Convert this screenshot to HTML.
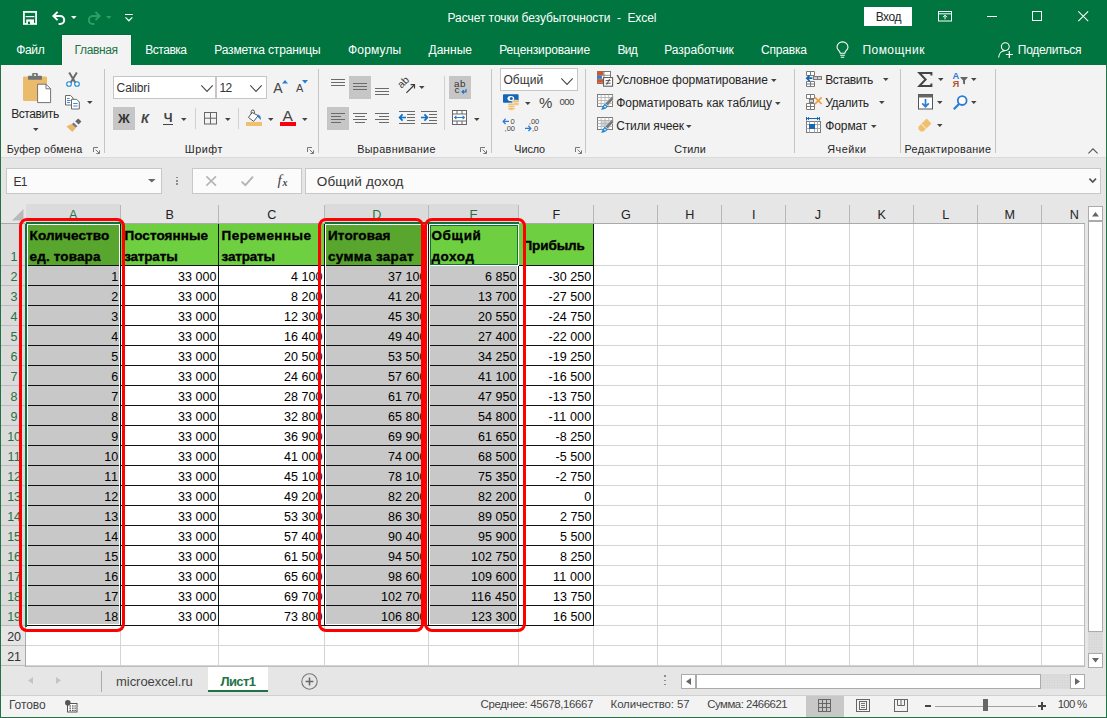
<!DOCTYPE html>
<html><head><meta charset="utf-8"><title>Excel</title>
<style>
html,body{margin:0;padding:0;}
body{width:1107px;height:718px;overflow:hidden;position:relative;background:#e6e6e6;font-family:"Liberation Sans", sans-serif;}
.b{position:absolute;box-sizing:border-box;}
.t{position:absolute;white-space:pre;font-family:"Liberation Sans", sans-serif;}
svg{overflow:visible;}
</style></head><body>
<div class="b" style="left:0px;top:0px;width:1107px;height:65px;background:#00753f;"></div>
<div class="b" style="left:0px;top:65px;width:1107px;height:92.5px;background:#f3f3f3;"></div>
<div class="b" style="left:0px;top:157px;width:1107px;height:1px;background:#dadada;"></div>
<div class="b" style="left:0px;top:695px;width:1107px;height:23px;background:#f3f3f3;"></div>
<div class="b" style="left:0px;top:695px;width:1107px;height:1px;background:#d0d0d0;"></div>
<svg class="b" style="left:23px;top:11px;" width="14" height="14" viewBox="0 0 14 14"><rect x=".9" y=".9" width="12.2" height="12" fill="none" stroke="#fff" stroke-width="1.8"/><path d="M2.6 5.6H11.4" stroke="#fff" stroke-width="1.2"/><rect x="3.2" y="8.4" width="7.8" height="4.6" fill="#fff"/><rect x="5" y="10.6" width="2" height="2.6" fill="#00753f"/></svg>
<svg class="b" style="left:52px;top:10.5px;" width="14" height="14" viewBox="0 0 14 14"><path d="M1.4 5H8.2A4 4 0 0 1 8.2 13H6.6" fill="none" stroke="#fff" stroke-width="2"/><path d="M5.6 .9L1.4 5L5.6 9.1" fill="none" stroke="#fff" stroke-width="2"/></svg>
<svg class="b" style="left:70.9px;top:16.3px;" width="5.6" height="3.1" viewBox="0 0 5.6 3.1"><path d="M0 0H5.6L2.8 3.1Z" fill="#fff"/></svg>
<svg class="b" style="left:87px;top:10.5px;" width="14" height="14" viewBox="0 0 14 14"><path d="M12.6 5H5.8A4 4 0 0 0 5.8 13H7.4" fill="none" stroke="#28a262" stroke-width="2"/><path d="M8.4 .9L12.6 5L8.4 9.1" fill="none" stroke="#28a262" stroke-width="2"/></svg>
<svg class="b" style="left:106.0px;top:16.3px;" width="5.6" height="3.1" viewBox="0 0 5.6 3.1"><path d="M0 0H5.6L2.8 3.1Z" fill="#28a262"/></svg>
<svg class="b" style="left:124.8px;top:13.6px;" width="7.8" height="8" viewBox="0 0 7.8 8"><path d="M0 .5H7.8" stroke="#fff" stroke-width="1"/><path d="M.5 3.4L3.9 6.8L7.3 3.4" fill="none" stroke="#fff" stroke-width="1.2"/></svg>
<span class="t" style="left:447.50px;top:12.00px;font-size:12px;line-height:12px;color:#ffffff;letter-spacing:-0.059px;">Расчет точки безубыточности  -  Excel</span>
<div class="b" style="left:863.5px;top:7px;width:48.5px;height:19px;background:#fff;"></div>
<span class="t" style="left:875.70px;top:11.40px;font-size:12px;line-height:12px;color:#262626;letter-spacing:-0.464px;">Вход</span>
<svg class="b" style="left:937.5px;top:11px;" width="14" height="10.5" viewBox="0 0 14 10.5"><rect x=".5" y=".5" width="13" height="9.5" fill="none" stroke="#fff"/><path d="M.5 2.8H13.5" stroke="#fff"/><path d="M7 8.3V4.3M5 6.2L7 4.2L9 6.2" fill="none" stroke="#fff"/></svg>
<div class="b" style="left:986.5px;top:16px;width:10px;height:1px;background:#fff;"></div>
<div class="b" style="left:1032px;top:11px;width:10px;height:10px;border:1px solid #fff;"></div>
<svg class="b" style="left:1078px;top:11px;" width="10.5" height="10.5" viewBox="0 0 10.5 10.5"><path d="M.3.3L10.2 10.2M10.2.3L.3 10.2" stroke="#fff" stroke-width="1.05"/></svg>
<div class="b" style="left:61px;top:34px;width:71px;height:31px;background:#006c36;"></div>
<div class="b" style="left:62px;top:35px;width:69px;height:30px;background:#f3f3f3;"></div>
<div class="b" style="left:62px;top:35px;width:69px;height:1px;background:#fdfdfd;"></div>
<div class="b" style="left:62px;top:35px;width:1px;height:30px;background:#fdfdfd;"></div>
<span class="t" style="left:16.30px;top:44.00px;font-size:12px;line-height:12px;color:#ffffff;letter-spacing:-0.379px;">Файл</span>
<span class="t" style="left:74.60px;top:44.00px;font-size:12px;line-height:12px;color:#217346;letter-spacing:-0.384px;">Главная</span>
<span class="t" style="left:145.20px;top:44.00px;font-size:12px;line-height:12px;color:#ffffff;letter-spacing:-0.458px;">Вставка</span>
<span class="t" style="left:214.20px;top:44.00px;font-size:12px;line-height:12px;color:#ffffff;letter-spacing:-0.151px;">Разметка страницы</span>
<span class="t" style="left:348.00px;top:44.00px;font-size:12px;line-height:12px;color:#ffffff;letter-spacing:0.169px;">Формулы</span>
<span class="t" style="left:428.50px;top:44.00px;font-size:12px;line-height:12px;color:#ffffff;letter-spacing:0.023px;">Данные</span>
<span class="t" style="left:499.20px;top:44.00px;font-size:12px;line-height:12px;color:#ffffff;letter-spacing:-0.134px;">Рецензирование</span>
<span class="t" style="left:617.60px;top:44.00px;font-size:12px;line-height:12px;color:#ffffff;letter-spacing:-0.773px;">Вид</span>
<span class="t" style="left:664.30px;top:44.00px;font-size:12px;line-height:12px;color:#ffffff;letter-spacing:-0.044px;">Разработчик</span>
<span class="t" style="left:761.00px;top:44.00px;font-size:12px;line-height:12px;color:#ffffff;letter-spacing:-0.183px;">Справка</span>
<span class="t" style="left:862.40px;top:44.00px;font-size:12px;line-height:12px;color:#ffffff;letter-spacing:0.477px;">Помощник</span>
<span class="t" style="left:1017.80px;top:44.00px;font-size:12px;line-height:12px;color:#ffffff;letter-spacing:-0.287px;">Поделиться</span>
<svg class="b" style="left:836px;top:42px;" width="13" height="17" viewBox="0 0 13 17"><path d="M4.2 11.2C4.2 9.2 1 8 1 5.2A5.4 5.2 0 0 1 12 5.2C12 8 8.8 9.2 8.8 11.2Z" fill="none" stroke="#fff" stroke-width="1.1"/><path d="M4.2 13.2H8.8M4.8 15.2H8.2" stroke="#fff" stroke-width="1.1"/></svg>
<svg class="b" style="left:998px;top:42px;" width="16" height="17" viewBox="0 0 16 17"><circle cx="7.3" cy="4.6" r="3.9" fill="none" stroke="#fff" stroke-width="1.1"/><path d="M.6 15.5C1 11 4 8.6 7 8.6" fill="none" stroke="#fff" stroke-width="1.1"/><path d="M11.3 9V16M7.8 12.5H14.8" stroke="#fff" stroke-width="1.2"/></svg>
<div class="b" style="left:104px;top:69px;width:1px;height:84px;background:#c6c6c6;"></div>
<div class="b" style="left:318px;top:69px;width:1px;height:84px;background:#c6c6c6;"></div>
<div class="b" style="left:491px;top:69px;width:1px;height:84px;background:#c6c6c6;"></div>
<div class="b" style="left:585px;top:69px;width:1px;height:84px;background:#c6c6c6;"></div>
<div class="b" style="left:794px;top:69px;width:1px;height:84px;background:#c6c6c6;"></div>
<div class="b" style="left:900px;top:69px;width:1px;height:84px;background:#c6c6c6;"></div>
<div class="b" style="left:995px;top:69px;width:1px;height:84px;background:#c6c6c6;"></div>
<span class="t" style="left:6.70px;top:143.60px;font-size:10.8px;line-height:10.8px;color:#262626;letter-spacing:0.194px;">Буфер обмена</span>
<span class="t" style="left:184.80px;top:143.60px;font-size:10.8px;line-height:10.8px;color:#262626;letter-spacing:0.534px;">Шрифт</span>
<span class="t" style="left:357.20px;top:143.60px;font-size:10.8px;line-height:10.8px;color:#262626;letter-spacing:0.356px;">Выравнивание</span>
<span class="t" style="left:514.30px;top:143.60px;font-size:10.8px;line-height:10.8px;color:#262626;letter-spacing:-0.072px;">Число</span>
<span class="t" style="left:674.30px;top:143.60px;font-size:10.8px;line-height:10.8px;color:#262626;letter-spacing:0.078px;">Стили</span>
<span class="t" style="left:827.20px;top:143.60px;font-size:10.8px;line-height:10.8px;color:#262626;letter-spacing:0.514px;">Ячейки</span>
<span class="t" style="left:904.50px;top:143.60px;font-size:10.8px;line-height:10.8px;color:#262626;letter-spacing:0.325px;">Редактирование</span>
<svg class="b" style="left:93px;top:146.5px;" width="7" height="7" viewBox="0 0 7 7"><path d="M.5 5V.5H5" fill="none" stroke="#777" stroke-width="1"/><path d="M2.6 2.6L6.2 6.2M6.5 3.4V6.5H3.4" fill="none" stroke="#777" stroke-width="1"/></svg>
<svg class="b" style="left:307px;top:146.5px;" width="7" height="7" viewBox="0 0 7 7"><path d="M.5 5V.5H5" fill="none" stroke="#777" stroke-width="1"/><path d="M2.6 2.6L6.2 6.2M6.5 3.4V6.5H3.4" fill="none" stroke="#777" stroke-width="1"/></svg>
<svg class="b" style="left:480px;top:146.5px;" width="7" height="7" viewBox="0 0 7 7"><path d="M.5 5V.5H5" fill="none" stroke="#777" stroke-width="1"/><path d="M2.6 2.6L6.2 6.2M6.5 3.4V6.5H3.4" fill="none" stroke="#777" stroke-width="1"/></svg>
<svg class="b" style="left:574.5px;top:146.5px;" width="7" height="7" viewBox="0 0 7 7"><path d="M.5 5V.5H5" fill="none" stroke="#777" stroke-width="1"/><path d="M2.6 2.6L6.2 6.2M6.5 3.4V6.5H3.4" fill="none" stroke="#777" stroke-width="1"/></svg>
<svg class="b" style="left:1088px;top:147.5px;" width="10" height="6" viewBox="0 0 10 6"><path d="M.4 5.4L5 .8L9.6 5.4" fill="none" stroke="#555" stroke-width="1.1"/></svg>
<svg class="b" style="left:23px;top:73px;" width="29" height="31" viewBox="0 0 29 31"><rect x="0" y="3.4" width="24" height="24.6" rx="1.2" fill="#ebbb6c"/>
<rect x="5" y="2.8" width="14" height="3.9" rx=".6" fill="#737373"/><rect x="9.2" y="0" width="5.6" height="4" rx=".8" fill="#737373"/><rect x="11" y="1.3" width="2" height="1.6" fill="#f3f3f3"/>
<path d="M14.6 11.2H23L27.6 15.8V29.6H14.6Z" fill="#fff" stroke="#737373" stroke-width="1"/><path d="M23 11.2V15.8H27.6" fill="none" stroke="#737373" stroke-width="1"/></svg>
<span class="t" style="left:11.20px;top:108.00px;font-size:12px;line-height:12px;color:#262626;letter-spacing:-0.409px;">Вставить</span>
<svg class="b" style="left:32.900000000000006px;top:128px;" width="5.6" height="3.1" viewBox="0 0 5.6 3.1"><path d="M0 0H5.6L2.8 3.1Z" fill="#444"/></svg>
<svg class="b" style="left:66px;top:71.5px;" width="14" height="15" viewBox="0 0 14 15"><path d="M3.2 .4L9.2 10.4M10.8 .4L4.8 10.4" stroke="#6a6a6a" stroke-width="2" fill="none"/>
<circle cx="3" cy="12" r="2.3" fill="#fff" stroke="#1e88d6" stroke-width="1.1"/><circle cx="11" cy="12" r="2.3" fill="#fff" stroke="#1e88d6" stroke-width="1.1"/></svg>
<svg class="b" style="left:65px;top:95px;" width="15" height="14.5" viewBox="0 0 15 14.5"><path d="M.5 .5H5.6L8 2.9V10H.5Z" fill="#fff" stroke="#6a6a6a"/><path d="M2 3.5H4.6M2 5.5H5.6M2 7.5H5" stroke="#2b7cd3" stroke-width=".9"/>
<path d="M6.5 4.3H11.6L14.3 7V14H6.5Z" fill="#fff" stroke="#6a6a6a"/><path d="M8.2 8.5H12.6M8.2 11H12.6" stroke="#2b7cd3" stroke-width=".9"/></svg>
<svg class="b" style="left:86.9px;top:100.8px;" width="5.6" height="3.1" viewBox="0 0 5.6 3.1"><path d="M0 0H5.6L2.8 3.1Z" fill="#444"/></svg>
<svg class="b" style="left:65.5px;top:117.5px;" width="16" height="14" viewBox="0 0 16 14"><path d="M9.2 3.2L12.2 .6L15.4 3.6L12.6 6.6Z" fill="#666"/><path d="M7.6 4.6L11.4 8.2L9.6 9.8L5.8 6.2Z" fill="#777"/>
<path d="M5.4 6L9.8 10L6.4 14L.4 8.4Z" fill="#eab866"/></svg>
<div class="b" style="left:113px;top:76px;width:103px;height:22.5px;background:#fff;border:1px solid #c6c6c6;"></div>
<div class="b" style="left:216px;top:76px;width:51px;height:22.5px;background:#fff;border:1px solid #c6c6c6;"></div>
<span class="t" style="left:116.60px;top:82.00px;font-size:12px;line-height:12px;color:#333;letter-spacing:-0.117px;">Calibri</span>
<span class="t" style="left:219.40px;top:82.00px;font-size:12px;line-height:12px;color:#333;letter-spacing:-0.680px;">12</span>
<svg class="b" style="left:200.5px;top:85px;" width="12" height="7" viewBox="0 0 12 7"><path d="M.3 .4L6.0 6.4L11.7 .4" fill="none" stroke="#444" stroke-width="1.05"/></svg>
<svg class="b" style="left:249.5px;top:85px;" width="12" height="7" viewBox="0 0 12 7"><path d="M.3 .4L6.0 6.4L11.7 .4" fill="none" stroke="#444" stroke-width="1.05"/></svg>
<span class="t" style="left:273.30px;top:80.60px;font-size:14px;line-height:14px;color:#444;letter-spacing:-0.044px;">A</span>
<svg class="b" style="left:281.5px;top:79.5px;" width="6" height="3.4" viewBox="0 0 6 3.4"><path d="M0 3.4L3 0L6 3.4Z" fill="#2b7cd3"/></svg>
<span class="t" style="left:296.00px;top:83.00px;font-size:11px;line-height:11px;color:#444;letter-spacing:-0.344px;">A</span>
<svg class="b" style="left:302px;top:80px;" width="6" height="3.4" viewBox="0 0 6 3.4"><path d="M0 0H6L3 3.4Z" fill="#2b7cd3"/></svg>
<div class="b" style="left:113px;top:107px;width:22px;height:23px;background:#c6c6c6;"></div>
<span class="t" style="left:118.00px;top:112.20px;font-size:13px;line-height:13px;color:#333;font-weight:bold;letter-spacing:1.050px;">Ж</span>
<span class="t" style="left:141.00px;top:112.20px;font-size:13px;line-height:13px;color:#444;font-weight:bold;font-style:italic;letter-spacing:1.000px;">К</span>
<span class="t" style="left:163.80px;top:112.15px;font-size:12.5px;line-height:12.5px;color:#444;font-weight:bold;">Ч</span>
<div class="b" style="left:163.4px;top:124.4px;width:9.6px;height:1px;background:#444;"></div>
<svg class="b" style="left:181.39999999999998px;top:117.8px;" width="5.6" height="3.1" viewBox="0 0 5.6 3.1"><path d="M0 0H5.6L2.8 3.1Z" fill="#444"/></svg>
<div class="b" style="left:195px;top:108px;width:1px;height:21px;background:#d0d0d0;"></div>
<svg class="b" style="left:204px;top:111.5px;" width="13" height="12.5" viewBox="0 0 13 12.5"><rect x=".5" y=".5" width="12" height="11.5" fill="none" stroke="#666"/><path d="M6.5 .5V12M.5 6.2H12.5" stroke="#666"/></svg>
<svg class="b" style="left:224.5px;top:117.8px;" width="5.6" height="3.1" viewBox="0 0 5.6 3.1"><path d="M0 0H5.6L2.8 3.1Z" fill="#444"/></svg>
<div class="b" style="left:238px;top:108px;width:1px;height:21px;background:#d0d0d0;"></div>
<svg class="b" style="left:247px;top:109.5px;" width="16" height="12" viewBox="0 0 16 12"><path d="M5.2 2.6L1.4 7.4L6.6 11.4L11.2 5.6Z" fill="#fff" stroke="#555" stroke-width="1"/><path d="M4.2 4V1.6A1.6 1.6 0 0 1 7.4 1.6V3" fill="none" stroke="#555" stroke-width="1"/>
<path d="M11.2 4.4C13.6 5.4 14.4 7.6 13.6 10.2C12.6 8.6 11.8 7.6 10.4 6.8Z" fill="#2b7cd3"/></svg>
<div class="b" style="left:246px;top:122px;width:16.2px;height:3.6px;background:#f0c06e;"></div>
<svg class="b" style="left:267.59999999999997px;top:117.8px;" width="5.6" height="3.1" viewBox="0 0 5.6 3.1"><path d="M0 0H5.6L2.8 3.1Z" fill="#444"/></svg>
<span class="t" style="left:282.60px;top:108.35px;font-size:15.5px;line-height:15.5px;color:#444;letter-spacing:0.656px;">A</span>
<div class="b" style="left:280.3px;top:122px;width:15.8px;height:3.6px;background:#f5000c;"></div>
<svg class="b" style="left:301.8px;top:117.8px;" width="5.6" height="3.1" viewBox="0 0 5.6 3.1"><path d="M0 0H5.6L2.8 3.1Z" fill="#444"/></svg>
<div class="b" style="left:349px;top:76px;width:22px;height:23px;background:#c6c6c6;"></div>
<div class="b" style="left:327px;top:107px;width:22px;height:23px;background:#c6c6c6;"></div>
<div class="b" style="left:449px;top:76px;width:22px;height:23px;background:#c6c6c6;"></div>
<svg class="b" style="left:331px;top:79px;" width="14" height="9" viewBox="0 0 14 9"><rect x="0" y="0" width="14" height="1" fill="#6a6a6a"/><rect x="0" y="3" width="14" height="1" fill="#6a6a6a"/><rect x="0" y="6" width="14" height="1" fill="#6a6a6a"/></svg>
<svg class="b" style="left:353px;top:83px;" width="14" height="9" viewBox="0 0 14 9"><rect x="0" y="0" width="14" height="1" fill="#6a6a6a"/><rect x="0" y="3" width="14" height="1" fill="#6a6a6a"/><rect x="0" y="6" width="14" height="1" fill="#6a6a6a"/></svg>
<svg class="b" style="left:375px;top:88px;" width="14" height="9" viewBox="0 0 14 9"><rect x="0" y="0" width="14" height="1" fill="#6a6a6a"/><rect x="0" y="3" width="14" height="1" fill="#6a6a6a"/><rect x="0" y="6" width="14" height="1" fill="#6a6a6a"/></svg>
<svg class="b" style="left:331px;top:113px;" width="14" height="12" viewBox="0 0 14 12"><rect x="0" y="0" width="14" height="1" fill="#6a6a6a"/><rect x="0" y="3" width="10" height="1" fill="#6a6a6a"/><rect x="0" y="6" width="14" height="1" fill="#6a6a6a"/><rect x="0" y="9" width="10" height="1" fill="#6a6a6a"/></svg>
<svg class="b" style="left:353px;top:113px;" width="14" height="12" viewBox="0 0 14 12"><rect x="0.0" y="0" width="14" height="1" fill="#6a6a6a"/><rect x="2.0" y="3" width="10" height="1" fill="#6a6a6a"/><rect x="0.0" y="6" width="14" height="1" fill="#6a6a6a"/><rect x="2.0" y="9" width="10" height="1" fill="#6a6a6a"/></svg>
<svg class="b" style="left:375px;top:113px;" width="14" height="12" viewBox="0 0 14 12"><rect x="0" y="0" width="14" height="1" fill="#6a6a6a"/><rect x="4" y="3" width="10" height="1" fill="#6a6a6a"/><rect x="0" y="6" width="14" height="1" fill="#6a6a6a"/><rect x="4" y="9" width="10" height="1" fill="#6a6a6a"/></svg>
<svg class="b" style="left:399px;top:77px;" width="19" height="17" viewBox="0 0 19 17"><text x="0" y="0" font-family='"Liberation Sans",sans-serif' font-size="10.5" fill="#3c3c3c" transform="translate(2.6,11.8) rotate(-45)">ab</text>
<path d="M7.4 15.8L15.2 8" stroke="#3c3c3c" stroke-width="1.2"/><path d="M11.6 7.7H15.5V11.6" fill="none" stroke="#3c3c3c" stroke-width="1.2"/></svg>
<svg class="b" style="left:418.59999999999997px;top:86px;" width="5.6" height="3.1" viewBox="0 0 5.6 3.1"><path d="M0 0H5.6L2.8 3.1Z" fill="#444"/></svg>
<svg class="b" style="left:399px;top:111px;" width="16" height="13" viewBox="0 0 16 13"><path d="M.6 6.5H7M3.6 3.4L.6 6.5L3.6 9.6" fill="none" stroke="#0f6fc6" stroke-width="1.7"/>
<path d="M0 .5H16M8 3.5H16M8 6.5H16M8 9.5H16M0 12.5H16" stroke="#6a6a6a"/></svg>
<svg class="b" style="left:421px;top:111px;" width="16" height="13" viewBox="0 0 16 13"><path d="M0 6.5H6.4M3.4 3.4L6.4 6.5L3.4 9.6" fill="none" stroke="#0f6fc6" stroke-width="1.7"/>
<path d="M0 .5H16M8 3.5H16M8 6.5H16M8 9.5H16M0 12.5H16" stroke="#6a6a6a"/></svg>
<div class="b" style="left:444px;top:76px;width:1px;height:54px;background:#d0d0d0;"></div>
<span class="t" style="left:454.00px;top:78.60px;font-size:9.8px;line-height:9.8px;color:#333;letter-spacing:0.547px;">ab</span>
<span class="t" style="left:454.40px;top:84.80px;font-size:9.8px;line-height:9.8px;color:#333;letter-spacing:0.494px;">c</span>
<svg class="b" style="left:461px;top:89.2px;" width="6" height="5" viewBox="0 0 6 5"><path d="M5 0V2.8H1.2M2.8 1.1L1.1 2.8L2.8 4.5" fill="none" stroke="#1f6fc2" stroke-width="1.2"/></svg>
<svg class="b" style="left:452px;top:110px;" width="15" height="15" viewBox="0 0 15 15"><rect x=".5" y=".5" width="14" height="14" fill="#fff" stroke="#666"/><path d="M.5 4H14.5M.5 11H14.5M5 .5V4M10 .5V4M5 11V14.5M10 11V14.5" stroke="#666"/>
<path d="M2.6 7.5H12.4M4.4 5.8L2.6 7.5L4.4 9.2M10.6 5.8L12.4 7.5L10.6 9.2" fill="none" stroke="#2b7cd3" stroke-width="1.1"/></svg>
<svg class="b" style="left:473.59999999999997px;top:117.8px;" width="5.6" height="3.1" viewBox="0 0 5.6 3.1"><path d="M0 0H5.6L2.8 3.1Z" fill="#444"/></svg>
<div class="b" style="left:500px;top:68px;width:78px;height:23px;background:#fff;border:1px solid #c6c6c6;"></div>
<span class="t" style="left:503.40px;top:73.80px;font-size:12px;line-height:12px;color:#333;letter-spacing:0.060px;">Общий</span>
<svg class="b" style="left:560.5px;top:77.5px;" width="12" height="7" viewBox="0 0 12 7"><path d="M.3 .4L6.0 6.4L11.7 .4" fill="none" stroke="#444" stroke-width="1.05"/></svg>
<svg class="b" style="left:503px;top:94px;" width="17" height="16" viewBox="0 0 17 16"><rect x="0" y=".2" width="15.6" height="8.6" rx=".8" fill="#1766b5"/><ellipse cx="7.8" cy="4.5" rx="3.4" ry="2.6" fill="#fff"/><circle cx="8.3" cy="4.5" r="1.5" fill="#1766b5"/>
<ellipse cx="12.6" cy="7.6" rx="3.6" ry="1.5" fill="#f0c06e" stroke="#f3f3f3" stroke-width=".6"/><ellipse cx="12.6" cy="10" rx="3.6" ry="1.5" fill="#f0c06e" stroke="#f3f3f3" stroke-width=".6"/>
<ellipse cx="8.4" cy="10.6" rx="3.6" ry="1.5" fill="#f0c06e" stroke="#f3f3f3" stroke-width=".6"/><ellipse cx="8.4" cy="12.8" rx="3.6" ry="1.5" fill="#f0c06e" stroke="#f3f3f3" stroke-width=".6"/><ellipse cx="8.4" cy="14.8" rx="3.6" ry="1.4" fill="#f0c06e" stroke="#f3f3f3" stroke-width=".6"/></svg>
<svg class="b" style="left:524.7px;top:101.5px;" width="5.6" height="3.1" viewBox="0 0 5.6 3.1"><path d="M0 0H5.6L2.8 3.1Z" fill="#444"/></svg>
<span class="t" style="left:539.00px;top:95.00px;font-size:15px;line-height:15px;color:#444;letter-spacing:0.056px;">%</span>
<span class="t" style="left:559.40px;top:96.70px;font-size:9.6px;line-height:9.6px;color:#444;letter-spacing:-0.472px;">000</span>
<svg class="b" style="left:503px;top:118px;" width="16" height="14" viewBox="0 0 16 14"><path d="M0 3.4H6M2.6 .8L.2 3.4L2.6 6" fill="none" stroke="#2b7cd3" stroke-width="1.3"/>
<text x="7.6" y="6.2" font-family='"Liberation Sans",sans-serif' font-size="7.5" fill="#444">0</text><text x="1.6" y="13.4" font-family='"Liberation Sans",sans-serif' font-size="7.5" fill="#444">,00</text></svg>
<svg class="b" style="left:524.5px;top:118px;" width="16" height="14" viewBox="0 0 16 14"><text x="3.8" y="6.2" font-family='"Liberation Sans",sans-serif' font-size="7.5" fill="#444">,00</text>
<path d="M0 10.4H6M3.4 7.8L5.8 10.4L3.4 13" fill="none" stroke="#2b7cd3" stroke-width="1.3"/><text x="7" y="13.4" font-family='"Liberation Sans",sans-serif' font-size="7.5" fill="#444">,0</text></svg>
<svg class="b" style="left:597px;top:71px;" width="16" height="15.5" viewBox="0 0 16 15.5"><rect x=".5" y=".5" width="13" height="12" fill="#fff" stroke="#777"/><rect x=".5" y=".5" width="6" height="3.6" fill="#d9541e"/><rect x=".5" y="4.4" width="4.4" height="3.4" fill="#2b7cd3"/><rect x=".5" y="8.2" width="6" height="3.6" fill="#d9541e"/>
<path d="M7 .5V12.5M.5 4.3H13.5M.5 8.1H13.5" stroke="#777" stroke-width=".8"/><rect x="6.6" y="6.6" width="9" height="8.6" fill="#fff" stroke="#555"/><path d="M8.6 9.6H13.6M8.6 12.2H13.6M12.6 8L9.6 13.8" stroke="#444" stroke-width=".9"/></svg>
<svg class="b" style="left:597px;top:94px;" width="16" height="16" viewBox="0 0 16 16"><rect x=".5" y=".5" width="15" height="12" fill="#fff" stroke="#7a7a7a"/><path d="M.5 3.5H15.5M.5 6.5H15.5M.5 9.5H15.5M4.2 .5V12.5M8 .5V12.5M11.8 .5V12.5" stroke="#b4b4b4" stroke-width=".9"/>
<path d="M16.2 1.2V5.6L10.8 11.8L8 9.4Z" fill="#777" stroke="#f3f3f3" stroke-width=".5"/><path d="M7.7 9.7L10.5 12.1C10.2 14.6 7.6 15.9 3.8 15.6C5.6 14.2 5.4 11.4 7.7 9.7Z" fill="#1e88d6"/><circle cx="8" cy="12.6" r=".9" fill="#fff"/></svg>
<svg class="b" style="left:597px;top:117px;" width="16" height="16" viewBox="0 0 16 16"><rect x=".5" y=".5" width="15" height="12" fill="#fff" stroke="#7a7a7a"/><rect x="4.2" y="3.6" width="7.4" height="5.6" fill="#d6d6d6"/><path d="M.5 3.5H15.5M.5 6.5H15.5M.5 9.5H15.5M4.2 .5V12.5M8 .5V12.5M11.8 .5V12.5" stroke="#b4b4b4" stroke-width=".9"/>
<path d="M16.2 1.2V5.6L10.8 11.8L8 9.4Z" fill="#777" stroke="#f3f3f3" stroke-width=".5"/><path d="M7.7 9.7L10.5 12.1C10.2 14.6 7.6 15.9 3.8 15.6C5.6 14.2 5.4 11.4 7.7 9.7Z" fill="#1e88d6"/><circle cx="8" cy="12.6" r=".9" fill="#fff"/></svg>
<span class="t" style="left:616.20px;top:74.00px;font-size:12px;line-height:12px;color:#262626;letter-spacing:-0.047px;">Условное форматирование</span>
<svg class="b" style="left:770.5px;top:78.6px;" width="5.6" height="3.1" viewBox="0 0 5.6 3.1"><path d="M0 0H5.6L2.8 3.1Z" fill="#444"/></svg>
<span class="t" style="left:616.20px;top:97.20px;font-size:12px;line-height:12px;color:#262626;letter-spacing:-0.014px;">Форматировать как таблицу</span>
<svg class="b" style="left:774.5px;top:101.8px;" width="5.6" height="3.1" viewBox="0 0 5.6 3.1"><path d="M0 0H5.6L2.8 3.1Z" fill="#444"/></svg>
<span class="t" style="left:616.20px;top:120.20px;font-size:12px;line-height:12px;color:#262626;letter-spacing:-0.133px;">Стили ячеек</span>
<svg class="b" style="left:686.4000000000001px;top:124.8px;" width="5.6" height="3.1" viewBox="0 0 5.6 3.1"><path d="M0 0H5.6L2.8 3.1Z" fill="#444"/></svg>
<svg class="b" style="left:806px;top:71px;" width="16" height="16" viewBox="0 0 16 16"><path d="M.5 .5H8.5V4.5H.5ZM4.5 .5V4.5" fill="#fff" stroke="#7a7a7a"/><path d="M.5 10.5H8.5V15.5H.5ZM4.5 10.5V15.5M.5 13H8.5" fill="#fff" stroke="#7a7a7a"/>
<rect x="7.5" y="5.5" width="8" height="3" fill="#cfcfcf" stroke="#7a7a7a"/><path d="M11.5 5.5V8.5" stroke="#7a7a7a"/>
<path d="M6.4 7.2H1M3.6 4.4L.8 7.2L3.6 10" fill="none" stroke="#1766b5" stroke-width="1.7"/></svg>
<span class="t" style="left:825.20px;top:73.70px;font-size:12px;line-height:12px;color:#262626;letter-spacing:-0.384px;">Вставить</span>
<svg class="b" style="left:882.6px;top:78.4px;" width="5.6" height="3.1" viewBox="0 0 5.6 3.1"><path d="M0 0H5.6L2.8 3.1Z" fill="#444"/></svg>
<svg class="b" style="left:806px;top:94px;" width="16" height="16" viewBox="0 0 16 16"><path d="M.5 .5H8.5V4.5H.5ZM4.5 .5V4.5" fill="#fff" stroke="#7a7a7a"/><path d="M.5 9.5H8.5V15.5H.5ZM4.5 9.5V15.5M.5 12.5H8.5" fill="#fff" stroke="#7a7a7a"/>
<rect x="3.5" y="5.5" width="4" height="3" fill="#cfcfcf" stroke="#7a7a7a"/>
<path d="M9 3.4L15.6 10M15.6 3.4L9 10" stroke="#ef9a3c" stroke-width="1.7"/></svg>
<span class="t" style="left:825.20px;top:96.80px;font-size:12px;line-height:12px;color:#262626;letter-spacing:-0.318px;">Удалить</span>
<svg class="b" style="left:879.2px;top:101.4px;" width="5.6" height="3.1" viewBox="0 0 5.6 3.1"><path d="M0 0H5.6L2.8 3.1Z" fill="#444"/></svg>
<svg class="b" style="left:806px;top:117px;" width="16" height="17" viewBox="0 0 16 17"><path d="M.5 1.5H13.5M.5 0V3.4M13.5 0V3.4M3 .2L1.4 1.5L3 2.8M11 .2L12.6 1.5L11 2.8" fill="none" stroke="#1766b5" stroke-width="1"/>
<rect x=".5" y="4.5" width="14" height="11" fill="#fff" stroke="#7a7a7a"/><path d="M.5 7.5H14.5M.5 11.5H14.5M3.5 4.5V15.5M8.5 4.5V15.5M11.5 4.5V15.5" stroke="#a8a8a8" stroke-width="1"/><rect x="3" y="7" width="6" height="5" fill="#1766b5"/></svg>
<span class="t" style="left:825.20px;top:119.80px;font-size:12px;line-height:12px;color:#262626;letter-spacing:-0.090px;">Формат</span>
<svg class="b" style="left:871.2px;top:124.6px;" width="5.6" height="3.1" viewBox="0 0 5.6 3.1"><path d="M0 0H5.6L2.8 3.1Z" fill="#444"/></svg>
<svg class="b" style="left:917.5px;top:71.5px;" width="15" height="15" viewBox="0 0 15 15"><path d="M13.4 3.6V1H1.4L7.6 7.5L1.4 14H13.4V11.4" fill="none" stroke="#444" stroke-width="2"/></svg>
<svg class="b" style="left:938.2px;top:78.4px;" width="5.6" height="3.1" viewBox="0 0 5.6 3.1"><path d="M0 0H5.6L2.8 3.1Z" fill="#444"/></svg>
<span class="t" style="left:952.60px;top:71.20px;font-size:9.4px;line-height:9.4px;color:#2b7cd3;font-weight:bold;letter-spacing:-0.381px;">A</span>
<span class="t" style="left:952.60px;top:79.20px;font-size:9.4px;line-height:9.4px;color:#b5532d;font-weight:bold;letter-spacing:-0.350px;">Я</span>
<svg class="b" style="left:959.5px;top:76.5px;" width="8" height="8" viewBox="0 0 8 8"><path d="M0 0H8L5 3.6V7.6L3 6.4V3.6Z" fill="#666"/></svg>
<svg class="b" style="left:971.2px;top:78.4px;" width="5.6" height="3.1" viewBox="0 0 5.6 3.1"><path d="M0 0H5.6L2.8 3.1Z" fill="#444"/></svg>
<svg class="b" style="left:918px;top:94px;" width="15" height="15.5" viewBox="0 0 15 15.5"><rect x=".5" y=".5" width="14" height="14.5" fill="#fff" stroke="#555"/><rect x=".5" y=".5" width="14" height="3" fill="#666"/>
<path d="M7.5 5V12.6M4.2 9.4L7.5 12.7L10.8 9.4" fill="none" stroke="#2b7cd3" stroke-width="1.7"/></svg>
<svg class="b" style="left:936.7px;top:101.4px;" width="5.6" height="3.1" viewBox="0 0 5.6 3.1"><path d="M0 0H5.6L2.8 3.1Z" fill="#444"/></svg>
<svg class="b" style="left:952.5px;top:94.5px;" width="15" height="15" viewBox="0 0 15 15"><circle cx="9.2" cy="5.6" r="4.4" fill="#fff" stroke="#2b7cd3" stroke-width="1.8"/><path d="M6 9L.8 14.2" stroke="#2b7cd3" stroke-width="2.2"/></svg>
<svg class="b" style="left:971.2px;top:101.4px;" width="5.6" height="3.1" viewBox="0 0 5.6 3.1"><path d="M0 0H5.6L2.8 3.1Z" fill="#444"/></svg>
<svg class="b" style="left:918px;top:117.5px;" width="14" height="14" viewBox="0 0 14 14"><path d="M8.6 .6L13.4 5.4L5.4 13.4H2.6L.6 11.4V8.6Z" fill="#f0c06e"/><path d="M3.4 6L8 10.6" stroke="#f7e0b4" stroke-width="1.2"/></svg>
<svg class="b" style="left:936.7px;top:124.4px;" width="5.6" height="3.1" viewBox="0 0 5.6 3.1"><path d="M0 0H5.6L2.8 3.1Z" fill="#444"/></svg>
<div class="b" style="left:6px;top:168px;width:156px;height:25.5px;background:#fbfbfb;border:1px solid #c8c8c8;"></div>
<span class="t" style="left:13.40px;top:175.60px;font-size:12px;line-height:12px;color:#333;letter-spacing:-0.744px;">E1</span>
<svg class="b" style="left:148px;top:178.8px;" width="7.6" height="3.6" viewBox="0 0 7.6 3.6"><path d="M0 0H7.6L3.8 3.6Z" fill="#666"/></svg>
<div class="b" style="left:176.3px;top:176.6px;width:1.6px;height:1.6px;background:#8c8c8c;"></div>
<div class="b" style="left:176.3px;top:180px;width:1.6px;height:1.6px;background:#8c8c8c;"></div>
<div class="b" style="left:176.3px;top:183.4px;width:1.6px;height:1.6px;background:#8c8c8c;"></div>
<div class="b" style="left:192px;top:168px;width:109.5px;height:25.5px;background:#fbfbfb;border:1px solid #c8c8c8;"></div>
<svg class="b" style="left:206px;top:176px;" width="10.5" height="10" viewBox="0 0 10.5 10"><path d="M.4 .4L10 9.6M10 .4L.4 9.6" stroke="#b4b4b4" stroke-width="1.6"/></svg>
<svg class="b" style="left:241px;top:176px;" width="12.5" height="10" viewBox="0 0 12.5 10"><path d="M.6 5.6L4.4 9.2L12 .6" fill="none" stroke="#b4b4b4" stroke-width="1.9"/></svg>
<span class="t" style="left:277.40px;top:173.00px;font-size:15px;line-height:15px;color:#444;font-style:italic;letter-spacing:0.828px;font-family:'Liberation Serif',serif;">f</span>
<span class="t" style="left:282.60px;top:177.90px;font-size:10px;line-height:10px;color:#444;font-weight:bold;font-style:italic;letter-spacing:0.438px;font-family:'Liberation Serif',serif;">x</span>
<div class="b" style="left:305px;top:168px;width:796px;height:25.5px;background:#fbfbfb;border:1px solid #c8c8c8;"></div>
<span class="t" style="left:316.80px;top:175.35px;font-size:13.5px;line-height:13.5px;color:#333;letter-spacing:0.155px;">Общий доход</span>
<svg class="b" style="left:1089px;top:177.6px;" width="7.4" height="5" viewBox="0 0 7.4 5"><path d="M.4 .6L3.7 4L7 .6" fill="none" stroke="#555" stroke-width="1.7"/></svg>
<div class="b" style="left:26px;top:224px;width:1059px;height:443px;background:#fff;"></div>
<div class="b" style="left:120px;top:224px;width:1px;height:443px;background:#d4d4d4;"></div>
<div class="b" style="left:218px;top:224px;width:1px;height:443px;background:#d4d4d4;"></div>
<div class="b" style="left:324px;top:224px;width:1px;height:443px;background:#d4d4d4;"></div>
<div class="b" style="left:428px;top:224px;width:1px;height:443px;background:#d4d4d4;"></div>
<div class="b" style="left:518px;top:224px;width:1px;height:443px;background:#d4d4d4;"></div>
<div class="b" style="left:593px;top:224px;width:1px;height:443px;background:#d4d4d4;"></div>
<div class="b" style="left:657px;top:224px;width:1px;height:443px;background:#d4d4d4;"></div>
<div class="b" style="left:721px;top:224px;width:1px;height:443px;background:#d4d4d4;"></div>
<div class="b" style="left:785px;top:224px;width:1px;height:443px;background:#d4d4d4;"></div>
<div class="b" style="left:849px;top:224px;width:1px;height:443px;background:#d4d4d4;"></div>
<div class="b" style="left:913px;top:224px;width:1px;height:443px;background:#d4d4d4;"></div>
<div class="b" style="left:977px;top:224px;width:1px;height:443px;background:#d4d4d4;"></div>
<div class="b" style="left:1041px;top:224px;width:1px;height:443px;background:#d4d4d4;"></div>
<div class="b" style="left:26px;top:265px;width:1059px;height:1px;background:#d4d4d4;"></div>
<div class="b" style="left:26px;top:285px;width:1059px;height:1px;background:#d4d4d4;"></div>
<div class="b" style="left:26px;top:305px;width:1059px;height:1px;background:#d4d4d4;"></div>
<div class="b" style="left:26px;top:325px;width:1059px;height:1px;background:#d4d4d4;"></div>
<div class="b" style="left:26px;top:345px;width:1059px;height:1px;background:#d4d4d4;"></div>
<div class="b" style="left:26px;top:365px;width:1059px;height:1px;background:#d4d4d4;"></div>
<div class="b" style="left:26px;top:385px;width:1059px;height:1px;background:#d4d4d4;"></div>
<div class="b" style="left:26px;top:405px;width:1059px;height:1px;background:#d4d4d4;"></div>
<div class="b" style="left:26px;top:425px;width:1059px;height:1px;background:#d4d4d4;"></div>
<div class="b" style="left:26px;top:445px;width:1059px;height:1px;background:#d4d4d4;"></div>
<div class="b" style="left:26px;top:465px;width:1059px;height:1px;background:#d4d4d4;"></div>
<div class="b" style="left:26px;top:485px;width:1059px;height:1px;background:#d4d4d4;"></div>
<div class="b" style="left:26px;top:505px;width:1059px;height:1px;background:#d4d4d4;"></div>
<div class="b" style="left:26px;top:525px;width:1059px;height:1px;background:#d4d4d4;"></div>
<div class="b" style="left:26px;top:545px;width:1059px;height:1px;background:#d4d4d4;"></div>
<div class="b" style="left:26px;top:565px;width:1059px;height:1px;background:#d4d4d4;"></div>
<div class="b" style="left:26px;top:585px;width:1059px;height:1px;background:#d4d4d4;"></div>
<div class="b" style="left:26px;top:605px;width:1059px;height:1px;background:#d4d4d4;"></div>
<div class="b" style="left:26px;top:625px;width:1059px;height:1px;background:#d4d4d4;"></div>
<div class="b" style="left:26px;top:645px;width:1059px;height:1px;background:#d4d4d4;"></div>
<div class="b" style="left:26px;top:665px;width:1059px;height:1px;background:#d4d4d4;"></div>
<div class="b" style="left:1084px;top:224px;width:1px;height:443px;background:#bdbdbd;"></div>
<div class="b" style="left:26px;top:666px;width:1059px;height:1px;background:#bdbdbd;"></div>
<div class="b" style="left:1px;top:204px;width:1084px;height:20px;background:#e6e6e6;"></div>
<div class="b" style="left:26px;top:204px;width:94px;height:19px;background:#dbdbdb;background-image:radial-gradient(#c6c6c6 .6px,transparent .7px);background-size:4px 4px;"></div>
<span class="t" style="left:69.10px;top:208.70px;font-size:12.6px;line-height:12.6px;color:#217346;">A</span>
<span class="t" style="left:165.60px;top:208.70px;font-size:12.6px;line-height:12.6px;color:#222;">B</span>
<span class="t" style="left:267.25px;top:208.70px;font-size:12.6px;line-height:12.6px;color:#222;">C</span>
<div class="b" style="left:325px;top:204px;width:103px;height:19px;background:#dbdbdb;background-image:radial-gradient(#c6c6c6 .6px,transparent .7px);background-size:4px 4px;"></div>
<span class="t" style="left:372.25px;top:208.70px;font-size:12.6px;line-height:12.6px;color:#217346;">D</span>
<div class="b" style="left:429px;top:204px;width:89px;height:19px;background:#dbdbdb;background-image:radial-gradient(#c6c6c6 .6px,transparent .7px);background-size:4px 4px;"></div>
<span class="t" style="left:469.60px;top:208.70px;font-size:12.6px;line-height:12.6px;color:#217346;">E</span>
<span class="t" style="left:552.45px;top:208.70px;font-size:12.6px;line-height:12.6px;color:#222;">F</span>
<span class="t" style="left:620.90px;top:208.70px;font-size:12.6px;line-height:12.6px;color:#222;">G</span>
<span class="t" style="left:685.25px;top:208.70px;font-size:12.6px;line-height:12.6px;color:#222;">H</span>
<span class="t" style="left:752.05px;top:208.70px;font-size:12.6px;line-height:12.6px;color:#222;">I</span>
<span class="t" style="left:814.65px;top:208.70px;font-size:12.6px;line-height:12.6px;color:#222;">J</span>
<span class="t" style="left:877.60px;top:208.70px;font-size:12.6px;line-height:12.6px;color:#222;">K</span>
<span class="t" style="left:942.29px;top:208.70px;font-size:12.6px;line-height:12.6px;color:#222;">L</span>
<span class="t" style="left:1004.55px;top:208.70px;font-size:12.6px;line-height:12.6px;color:#222;">M</span>
<span class="t" style="left:1069.75px;top:208.70px;font-size:12.6px;line-height:12.6px;color:#222;">N</span>
<div class="b" style="left:120px;top:205px;width:1px;height:18px;background:#b8b8b8;"></div>
<div class="b" style="left:218px;top:205px;width:1px;height:18px;background:#b8b8b8;"></div>
<div class="b" style="left:324px;top:205px;width:1px;height:18px;background:#b8b8b8;"></div>
<div class="b" style="left:428px;top:205px;width:1px;height:18px;background:#b8b8b8;"></div>
<div class="b" style="left:518px;top:205px;width:1px;height:18px;background:#b8b8b8;"></div>
<div class="b" style="left:593px;top:205px;width:1px;height:18px;background:#b8b8b8;"></div>
<div class="b" style="left:657px;top:205px;width:1px;height:18px;background:#b8b8b8;"></div>
<div class="b" style="left:721px;top:205px;width:1px;height:18px;background:#b8b8b8;"></div>
<div class="b" style="left:785px;top:205px;width:1px;height:18px;background:#b8b8b8;"></div>
<div class="b" style="left:849px;top:205px;width:1px;height:18px;background:#b8b8b8;"></div>
<div class="b" style="left:913px;top:205px;width:1px;height:18px;background:#b8b8b8;"></div>
<div class="b" style="left:977px;top:205px;width:1px;height:18px;background:#b8b8b8;"></div>
<div class="b" style="left:1041px;top:205px;width:1px;height:18px;background:#b8b8b8;"></div>
<div class="b" style="left:1px;top:223px;width:1084px;height:1px;background:#a9a9a9;"></div>
<svg class="b" style="left:12px;top:208.5px;" width="11.5" height="11.5" viewBox="0 0 11.5 11.5"><path d="M11.5 0V11.5H0Z" fill="#b9b9b9"/></svg>
<div class="b" style="left:1px;top:224px;width:25px;height:443px;background:#e6e6e6;"></div>
<div class="b" style="left:1px;top:224px;width:25px;height:402px;background:#dbdbdb;background-image:radial-gradient(#cfcfcf .6px,transparent .7px);background-size:4px 4px;"></div>
<div class="b" style="left:1px;top:265px;width:25px;height:1px;background:#bcbcbc;"></div>
<span class="t" style="left:10.62px;top:250.75px;font-size:12.5px;line-height:12.5px;color:#217346;">1</span>
<div class="b" style="left:1px;top:285px;width:25px;height:1px;background:#bcbcbc;"></div>
<span class="t" style="left:10.62px;top:270.75px;font-size:12.5px;line-height:12.5px;color:#217346;">2</span>
<div class="b" style="left:1px;top:305px;width:25px;height:1px;background:#bcbcbc;"></div>
<span class="t" style="left:10.62px;top:290.75px;font-size:12.5px;line-height:12.5px;color:#217346;">3</span>
<div class="b" style="left:1px;top:325px;width:25px;height:1px;background:#bcbcbc;"></div>
<span class="t" style="left:10.62px;top:310.75px;font-size:12.5px;line-height:12.5px;color:#217346;">4</span>
<div class="b" style="left:1px;top:345px;width:25px;height:1px;background:#bcbcbc;"></div>
<span class="t" style="left:10.62px;top:330.75px;font-size:12.5px;line-height:12.5px;color:#217346;">5</span>
<div class="b" style="left:1px;top:365px;width:25px;height:1px;background:#bcbcbc;"></div>
<span class="t" style="left:10.62px;top:350.75px;font-size:12.5px;line-height:12.5px;color:#217346;">6</span>
<div class="b" style="left:1px;top:385px;width:25px;height:1px;background:#bcbcbc;"></div>
<span class="t" style="left:10.62px;top:370.75px;font-size:12.5px;line-height:12.5px;color:#217346;">7</span>
<div class="b" style="left:1px;top:405px;width:25px;height:1px;background:#bcbcbc;"></div>
<span class="t" style="left:10.62px;top:390.75px;font-size:12.5px;line-height:12.5px;color:#217346;">8</span>
<div class="b" style="left:1px;top:425px;width:25px;height:1px;background:#bcbcbc;"></div>
<span class="t" style="left:10.62px;top:410.75px;font-size:12.5px;line-height:12.5px;color:#217346;">9</span>
<div class="b" style="left:1px;top:445px;width:25px;height:1px;background:#bcbcbc;"></div>
<span class="t" style="left:7.15px;top:430.75px;font-size:12.5px;line-height:12.5px;color:#217346;">10</span>
<div class="b" style="left:1px;top:465px;width:25px;height:1px;background:#bcbcbc;"></div>
<span class="t" style="left:7.61px;top:450.75px;font-size:12.5px;line-height:12.5px;color:#217346;">11</span>
<div class="b" style="left:1px;top:485px;width:25px;height:1px;background:#bcbcbc;"></div>
<span class="t" style="left:7.15px;top:470.75px;font-size:12.5px;line-height:12.5px;color:#217346;">12</span>
<div class="b" style="left:1px;top:505px;width:25px;height:1px;background:#bcbcbc;"></div>
<span class="t" style="left:7.15px;top:490.75px;font-size:12.5px;line-height:12.5px;color:#217346;">13</span>
<div class="b" style="left:1px;top:525px;width:25px;height:1px;background:#bcbcbc;"></div>
<span class="t" style="left:7.15px;top:510.75px;font-size:12.5px;line-height:12.5px;color:#217346;">14</span>
<div class="b" style="left:1px;top:545px;width:25px;height:1px;background:#bcbcbc;"></div>
<span class="t" style="left:7.15px;top:530.75px;font-size:12.5px;line-height:12.5px;color:#217346;">15</span>
<div class="b" style="left:1px;top:565px;width:25px;height:1px;background:#bcbcbc;"></div>
<span class="t" style="left:7.15px;top:550.75px;font-size:12.5px;line-height:12.5px;color:#217346;">16</span>
<div class="b" style="left:1px;top:585px;width:25px;height:1px;background:#bcbcbc;"></div>
<span class="t" style="left:7.15px;top:570.75px;font-size:12.5px;line-height:12.5px;color:#217346;">17</span>
<div class="b" style="left:1px;top:605px;width:25px;height:1px;background:#bcbcbc;"></div>
<span class="t" style="left:7.15px;top:590.75px;font-size:12.5px;line-height:12.5px;color:#217346;">18</span>
<div class="b" style="left:1px;top:625px;width:25px;height:1px;background:#bcbcbc;"></div>
<span class="t" style="left:7.15px;top:610.75px;font-size:12.5px;line-height:12.5px;color:#217346;">19</span>
<div class="b" style="left:1px;top:645px;width:25px;height:1px;background:#bcbcbc;"></div>
<span class="t" style="left:7.15px;top:630.75px;font-size:12.5px;line-height:12.5px;color:#333;">20</span>
<div class="b" style="left:1px;top:665px;width:25px;height:1px;background:#bcbcbc;"></div>
<span class="t" style="left:7.15px;top:650.75px;font-size:12.5px;line-height:12.5px;color:#333;">21</span>
<div class="b" style="left:25px;top:224px;width:1px;height:443px;background:#a9a9a9;"></div>
<div class="b" style="left:26px;top:224px;width:567px;height:41px;background:#6ed040;"></div>
<div class="b" style="left:26px;top:224px;width:94px;height:41px;background:#58a62e;"></div>
<div class="b" style="left:325px;top:224px;width:103px;height:41px;background:#58a62e;"></div>
<div class="b" style="left:26px;top:266px;width:94px;height:359px;background:#c8c8c8;"></div>
<div class="b" style="left:325px;top:266px;width:103px;height:359px;background:#c8c8c8;"></div>
<div class="b" style="left:429px;top:266px;width:89px;height:359px;background:#c8c8c8;"></div>
<div class="b" style="left:25px;top:224px;width:1px;height:402px;background:#111;"></div>
<div class="b" style="left:120px;top:224px;width:1px;height:402px;background:#111;"></div>
<div class="b" style="left:218px;top:224px;width:1px;height:402px;background:#111;"></div>
<div class="b" style="left:324px;top:224px;width:1px;height:402px;background:#111;"></div>
<div class="b" style="left:428px;top:224px;width:1px;height:402px;background:#111;"></div>
<div class="b" style="left:518px;top:224px;width:1px;height:402px;background:#111;"></div>
<div class="b" style="left:593px;top:224px;width:1px;height:402px;background:#111;"></div>
<div class="b" style="left:25px;top:265px;width:569px;height:1px;background:#111;"></div>
<div class="b" style="left:25px;top:285px;width:569px;height:1px;background:#111;"></div>
<div class="b" style="left:25px;top:305px;width:569px;height:1px;background:#111;"></div>
<div class="b" style="left:25px;top:325px;width:569px;height:1px;background:#111;"></div>
<div class="b" style="left:25px;top:345px;width:569px;height:1px;background:#111;"></div>
<div class="b" style="left:25px;top:365px;width:569px;height:1px;background:#111;"></div>
<div class="b" style="left:25px;top:385px;width:569px;height:1px;background:#111;"></div>
<div class="b" style="left:25px;top:405px;width:569px;height:1px;background:#111;"></div>
<div class="b" style="left:25px;top:425px;width:569px;height:1px;background:#111;"></div>
<div class="b" style="left:25px;top:445px;width:569px;height:1px;background:#111;"></div>
<div class="b" style="left:25px;top:465px;width:569px;height:1px;background:#111;"></div>
<div class="b" style="left:25px;top:485px;width:569px;height:1px;background:#111;"></div>
<div class="b" style="left:25px;top:505px;width:569px;height:1px;background:#111;"></div>
<div class="b" style="left:25px;top:525px;width:569px;height:1px;background:#111;"></div>
<div class="b" style="left:25px;top:545px;width:569px;height:1px;background:#111;"></div>
<div class="b" style="left:25px;top:565px;width:569px;height:1px;background:#111;"></div>
<div class="b" style="left:25px;top:585px;width:569px;height:1px;background:#111;"></div>
<div class="b" style="left:25px;top:605px;width:569px;height:1px;background:#111;"></div>
<div class="b" style="left:25px;top:625px;width:569px;height:1px;background:#111;"></div>
<span class="t" style="left:29.60px;top:228.95px;font-size:13.5px;line-height:13.5px;color:#000;font-weight:bold;letter-spacing:0.101px;-webkit-text-stroke:.35px #000;">Количество</span>
<span class="t" style="left:29.60px;top:249.95px;font-size:13.5px;line-height:13.5px;color:#000;font-weight:bold;letter-spacing:0.134px;-webkit-text-stroke:.35px #000;">ед. товара</span>
<span class="t" style="left:124.40px;top:228.95px;font-size:13.5px;line-height:13.5px;color:#000;font-weight:bold;letter-spacing:0.078px;-webkit-text-stroke:.35px #000;">Постоянные</span>
<span class="t" style="left:124.20px;top:249.95px;font-size:13.5px;line-height:13.5px;color:#000;font-weight:bold;letter-spacing:-0.180px;-webkit-text-stroke:.35px #000;">затраты</span>
<span class="t" style="left:221.60px;top:228.95px;font-size:13.5px;line-height:13.5px;color:#000;font-weight:bold;letter-spacing:0.416px;-webkit-text-stroke:.35px #000;">Переменные</span>
<span class="t" style="left:221.60px;top:249.95px;font-size:13.5px;line-height:13.5px;color:#000;font-weight:bold;letter-spacing:-0.180px;-webkit-text-stroke:.35px #000;">затраты</span>
<span class="t" style="left:328.00px;top:228.95px;font-size:13.5px;line-height:13.5px;color:#000;font-weight:bold;letter-spacing:0.126px;-webkit-text-stroke:.35px #000;">Итоговая</span>
<span class="t" style="left:328.00px;top:249.95px;font-size:13.5px;line-height:13.5px;color:#000;font-weight:bold;letter-spacing:0.335px;-webkit-text-stroke:.35px #000;">сумма зарат</span>
<span class="t" style="left:431.40px;top:228.95px;font-size:13.5px;line-height:13.5px;color:#000;font-weight:bold;letter-spacing:0.674px;-webkit-text-stroke:.35px #000;">Общий</span>
<span class="t" style="left:431.40px;top:249.95px;font-size:13.5px;line-height:13.5px;color:#000;font-weight:bold;letter-spacing:0.581px;-webkit-text-stroke:.35px #000;">доход</span>
<span class="t" style="left:522.40px;top:238.75px;font-size:13.5px;line-height:13.5px;color:#000;font-weight:bold;letter-spacing:-0.086px;-webkit-text-stroke:.35px #000;">Прибыль</span>
<span class="t" style="left:111.35px;top:270.75px;font-size:12.5px;line-height:12.5px;color:#000;letter-spacing:0.097px;">1</span>
<span class="t" style="left:177.95px;top:270.75px;font-size:12.5px;line-height:12.5px;color:#000;letter-spacing:0.036px;">33 000</span>
<span class="t" style="left:291.00px;top:270.75px;font-size:12.5px;line-height:12.5px;color:#000;letter-spacing:0.024px;">4 100</span>
<span class="t" style="left:387.95px;top:270.75px;font-size:12.5px;line-height:12.5px;color:#000;letter-spacing:0.036px;">37 100</span>
<span class="t" style="left:485.00px;top:270.75px;font-size:12.5px;line-height:12.5px;color:#000;letter-spacing:0.024px;">6 850</span>
<span class="t" style="left:548.55px;top:270.75px;font-size:12.5px;line-height:12.5px;color:#000;letter-spacing:0.063px;">-30 250</span>
<span class="t" style="left:111.35px;top:290.75px;font-size:12.5px;line-height:12.5px;color:#000;letter-spacing:0.097px;">2</span>
<span class="t" style="left:177.95px;top:290.75px;font-size:12.5px;line-height:12.5px;color:#000;letter-spacing:0.036px;">33 000</span>
<span class="t" style="left:291.00px;top:290.75px;font-size:12.5px;line-height:12.5px;color:#000;letter-spacing:0.024px;">8 200</span>
<span class="t" style="left:387.95px;top:290.75px;font-size:12.5px;line-height:12.5px;color:#000;letter-spacing:0.036px;">41 200</span>
<span class="t" style="left:477.95px;top:290.75px;font-size:12.5px;line-height:12.5px;color:#000;letter-spacing:0.036px;">13 700</span>
<span class="t" style="left:548.55px;top:290.75px;font-size:12.5px;line-height:12.5px;color:#000;letter-spacing:0.063px;">-27 500</span>
<span class="t" style="left:111.35px;top:310.75px;font-size:12.5px;line-height:12.5px;color:#000;letter-spacing:0.097px;">3</span>
<span class="t" style="left:177.95px;top:310.75px;font-size:12.5px;line-height:12.5px;color:#000;letter-spacing:0.036px;">33 000</span>
<span class="t" style="left:283.95px;top:310.75px;font-size:12.5px;line-height:12.5px;color:#000;letter-spacing:0.036px;">12 300</span>
<span class="t" style="left:387.95px;top:310.75px;font-size:12.5px;line-height:12.5px;color:#000;letter-spacing:0.036px;">45 300</span>
<span class="t" style="left:477.95px;top:310.75px;font-size:12.5px;line-height:12.5px;color:#000;letter-spacing:0.036px;">20 550</span>
<span class="t" style="left:548.55px;top:310.75px;font-size:12.5px;line-height:12.5px;color:#000;letter-spacing:0.063px;">-24 750</span>
<span class="t" style="left:111.35px;top:330.75px;font-size:12.5px;line-height:12.5px;color:#000;letter-spacing:0.097px;">4</span>
<span class="t" style="left:177.95px;top:330.75px;font-size:12.5px;line-height:12.5px;color:#000;letter-spacing:0.036px;">33 000</span>
<span class="t" style="left:283.95px;top:330.75px;font-size:12.5px;line-height:12.5px;color:#000;letter-spacing:0.036px;">16 400</span>
<span class="t" style="left:387.95px;top:330.75px;font-size:12.5px;line-height:12.5px;color:#000;letter-spacing:0.036px;">49 400</span>
<span class="t" style="left:477.95px;top:330.75px;font-size:12.5px;line-height:12.5px;color:#000;letter-spacing:0.036px;">27 400</span>
<span class="t" style="left:548.55px;top:330.75px;font-size:12.5px;line-height:12.5px;color:#000;letter-spacing:0.063px;">-22 000</span>
<span class="t" style="left:111.35px;top:350.75px;font-size:12.5px;line-height:12.5px;color:#000;letter-spacing:0.097px;">5</span>
<span class="t" style="left:177.95px;top:350.75px;font-size:12.5px;line-height:12.5px;color:#000;letter-spacing:0.036px;">33 000</span>
<span class="t" style="left:283.95px;top:350.75px;font-size:12.5px;line-height:12.5px;color:#000;letter-spacing:0.036px;">20 500</span>
<span class="t" style="left:387.95px;top:350.75px;font-size:12.5px;line-height:12.5px;color:#000;letter-spacing:0.036px;">53 500</span>
<span class="t" style="left:477.95px;top:350.75px;font-size:12.5px;line-height:12.5px;color:#000;letter-spacing:0.036px;">34 250</span>
<span class="t" style="left:548.55px;top:350.75px;font-size:12.5px;line-height:12.5px;color:#000;letter-spacing:0.063px;">-19 250</span>
<span class="t" style="left:111.35px;top:370.75px;font-size:12.5px;line-height:12.5px;color:#000;letter-spacing:0.097px;">6</span>
<span class="t" style="left:177.95px;top:370.75px;font-size:12.5px;line-height:12.5px;color:#000;letter-spacing:0.036px;">33 000</span>
<span class="t" style="left:283.95px;top:370.75px;font-size:12.5px;line-height:12.5px;color:#000;letter-spacing:0.036px;">24 600</span>
<span class="t" style="left:387.95px;top:370.75px;font-size:12.5px;line-height:12.5px;color:#000;letter-spacing:0.036px;">57 600</span>
<span class="t" style="left:477.95px;top:370.75px;font-size:12.5px;line-height:12.5px;color:#000;letter-spacing:0.036px;">41 100</span>
<span class="t" style="left:548.55px;top:370.75px;font-size:12.5px;line-height:12.5px;color:#000;letter-spacing:0.063px;">-16 500</span>
<span class="t" style="left:111.35px;top:390.75px;font-size:12.5px;line-height:12.5px;color:#000;letter-spacing:0.097px;">7</span>
<span class="t" style="left:177.95px;top:390.75px;font-size:12.5px;line-height:12.5px;color:#000;letter-spacing:0.036px;">33 000</span>
<span class="t" style="left:283.95px;top:390.75px;font-size:12.5px;line-height:12.5px;color:#000;letter-spacing:0.036px;">28 700</span>
<span class="t" style="left:387.95px;top:390.75px;font-size:12.5px;line-height:12.5px;color:#000;letter-spacing:0.036px;">61 700</span>
<span class="t" style="left:477.95px;top:390.75px;font-size:12.5px;line-height:12.5px;color:#000;letter-spacing:0.036px;">47 950</span>
<span class="t" style="left:548.55px;top:390.75px;font-size:12.5px;line-height:12.5px;color:#000;letter-spacing:0.063px;">-13 750</span>
<span class="t" style="left:111.35px;top:410.75px;font-size:12.5px;line-height:12.5px;color:#000;letter-spacing:0.097px;">8</span>
<span class="t" style="left:177.95px;top:410.75px;font-size:12.5px;line-height:12.5px;color:#000;letter-spacing:0.036px;">33 000</span>
<span class="t" style="left:283.95px;top:410.75px;font-size:12.5px;line-height:12.5px;color:#000;letter-spacing:0.036px;">32 800</span>
<span class="t" style="left:387.95px;top:410.75px;font-size:12.5px;line-height:12.5px;color:#000;letter-spacing:0.036px;">65 800</span>
<span class="t" style="left:477.95px;top:410.75px;font-size:12.5px;line-height:12.5px;color:#000;letter-spacing:0.036px;">54 800</span>
<span class="t" style="left:548.55px;top:410.75px;font-size:12.5px;line-height:12.5px;color:#000;letter-spacing:0.197px;">-11 000</span>
<span class="t" style="left:111.35px;top:430.75px;font-size:12.5px;line-height:12.5px;color:#000;letter-spacing:0.097px;">9</span>
<span class="t" style="left:177.95px;top:430.75px;font-size:12.5px;line-height:12.5px;color:#000;letter-spacing:0.036px;">33 000</span>
<span class="t" style="left:283.95px;top:430.75px;font-size:12.5px;line-height:12.5px;color:#000;letter-spacing:0.036px;">36 900</span>
<span class="t" style="left:387.95px;top:430.75px;font-size:12.5px;line-height:12.5px;color:#000;letter-spacing:0.036px;">69 900</span>
<span class="t" style="left:477.95px;top:430.75px;font-size:12.5px;line-height:12.5px;color:#000;letter-spacing:0.036px;">61 650</span>
<span class="t" style="left:555.60px;top:430.75px;font-size:12.5px;line-height:12.5px;color:#000;letter-spacing:0.058px;">-8 250</span>
<span class="t" style="left:104.30px;top:450.75px;font-size:12.5px;line-height:12.5px;color:#000;letter-spacing:0.097px;">10</span>
<span class="t" style="left:177.95px;top:450.75px;font-size:12.5px;line-height:12.5px;color:#000;letter-spacing:0.036px;">33 000</span>
<span class="t" style="left:283.95px;top:450.75px;font-size:12.5px;line-height:12.5px;color:#000;letter-spacing:0.036px;">41 000</span>
<span class="t" style="left:387.95px;top:450.75px;font-size:12.5px;line-height:12.5px;color:#000;letter-spacing:0.036px;">74 000</span>
<span class="t" style="left:477.95px;top:450.75px;font-size:12.5px;line-height:12.5px;color:#000;letter-spacing:0.036px;">68 500</span>
<span class="t" style="left:555.60px;top:450.75px;font-size:12.5px;line-height:12.5px;color:#000;letter-spacing:0.058px;">-5 500</span>
<span class="t" style="left:104.30px;top:470.75px;font-size:12.5px;line-height:12.5px;color:#000;letter-spacing:0.558px;">11</span>
<span class="t" style="left:177.95px;top:470.75px;font-size:12.5px;line-height:12.5px;color:#000;letter-spacing:0.036px;">33 000</span>
<span class="t" style="left:283.95px;top:470.75px;font-size:12.5px;line-height:12.5px;color:#000;letter-spacing:0.036px;">45 100</span>
<span class="t" style="left:387.95px;top:470.75px;font-size:12.5px;line-height:12.5px;color:#000;letter-spacing:0.036px;">78 100</span>
<span class="t" style="left:477.95px;top:470.75px;font-size:12.5px;line-height:12.5px;color:#000;letter-spacing:0.036px;">75 350</span>
<span class="t" style="left:555.60px;top:470.75px;font-size:12.5px;line-height:12.5px;color:#000;letter-spacing:0.058px;">-2 750</span>
<span class="t" style="left:104.30px;top:490.75px;font-size:12.5px;line-height:12.5px;color:#000;letter-spacing:0.097px;">12</span>
<span class="t" style="left:177.95px;top:490.75px;font-size:12.5px;line-height:12.5px;color:#000;letter-spacing:0.036px;">33 000</span>
<span class="t" style="left:283.95px;top:490.75px;font-size:12.5px;line-height:12.5px;color:#000;letter-spacing:0.036px;">49 200</span>
<span class="t" style="left:387.95px;top:490.75px;font-size:12.5px;line-height:12.5px;color:#000;letter-spacing:0.036px;">82 200</span>
<span class="t" style="left:477.95px;top:490.75px;font-size:12.5px;line-height:12.5px;color:#000;letter-spacing:0.036px;">82 200</span>
<span class="t" style="left:584.35px;top:490.75px;font-size:12.5px;line-height:12.5px;color:#000;letter-spacing:0.097px;">0</span>
<span class="t" style="left:104.30px;top:510.75px;font-size:12.5px;line-height:12.5px;color:#000;letter-spacing:0.097px;">13</span>
<span class="t" style="left:177.95px;top:510.75px;font-size:12.5px;line-height:12.5px;color:#000;letter-spacing:0.036px;">33 000</span>
<span class="t" style="left:283.95px;top:510.75px;font-size:12.5px;line-height:12.5px;color:#000;letter-spacing:0.036px;">53 300</span>
<span class="t" style="left:387.95px;top:510.75px;font-size:12.5px;line-height:12.5px;color:#000;letter-spacing:0.036px;">86 300</span>
<span class="t" style="left:477.95px;top:510.75px;font-size:12.5px;line-height:12.5px;color:#000;letter-spacing:0.036px;">89 050</span>
<span class="t" style="left:560.00px;top:510.75px;font-size:12.5px;line-height:12.5px;color:#000;letter-spacing:0.024px;">2 750</span>
<span class="t" style="left:104.30px;top:530.75px;font-size:12.5px;line-height:12.5px;color:#000;letter-spacing:0.097px;">14</span>
<span class="t" style="left:177.95px;top:530.75px;font-size:12.5px;line-height:12.5px;color:#000;letter-spacing:0.036px;">33 000</span>
<span class="t" style="left:283.95px;top:530.75px;font-size:12.5px;line-height:12.5px;color:#000;letter-spacing:0.036px;">57 400</span>
<span class="t" style="left:387.95px;top:530.75px;font-size:12.5px;line-height:12.5px;color:#000;letter-spacing:0.036px;">90 400</span>
<span class="t" style="left:477.95px;top:530.75px;font-size:12.5px;line-height:12.5px;color:#000;letter-spacing:0.036px;">95 900</span>
<span class="t" style="left:560.00px;top:530.75px;font-size:12.5px;line-height:12.5px;color:#000;letter-spacing:0.024px;">5 500</span>
<span class="t" style="left:104.30px;top:550.75px;font-size:12.5px;line-height:12.5px;color:#000;letter-spacing:0.097px;">15</span>
<span class="t" style="left:177.95px;top:550.75px;font-size:12.5px;line-height:12.5px;color:#000;letter-spacing:0.036px;">33 000</span>
<span class="t" style="left:283.95px;top:550.75px;font-size:12.5px;line-height:12.5px;color:#000;letter-spacing:0.036px;">61 500</span>
<span class="t" style="left:387.95px;top:550.75px;font-size:12.5px;line-height:12.5px;color:#000;letter-spacing:0.036px;">94 500</span>
<span class="t" style="left:470.90px;top:550.75px;font-size:12.5px;line-height:12.5px;color:#000;letter-spacing:0.045px;">102 750</span>
<span class="t" style="left:560.00px;top:550.75px;font-size:12.5px;line-height:12.5px;color:#000;letter-spacing:0.024px;">8 250</span>
<span class="t" style="left:104.30px;top:570.75px;font-size:12.5px;line-height:12.5px;color:#000;letter-spacing:0.097px;">16</span>
<span class="t" style="left:177.95px;top:570.75px;font-size:12.5px;line-height:12.5px;color:#000;letter-spacing:0.036px;">33 000</span>
<span class="t" style="left:283.95px;top:570.75px;font-size:12.5px;line-height:12.5px;color:#000;letter-spacing:0.036px;">65 600</span>
<span class="t" style="left:387.95px;top:570.75px;font-size:12.5px;line-height:12.5px;color:#000;letter-spacing:0.036px;">98 600</span>
<span class="t" style="left:470.90px;top:570.75px;font-size:12.5px;line-height:12.5px;color:#000;letter-spacing:0.045px;">109 600</span>
<span class="t" style="left:552.95px;top:570.75px;font-size:12.5px;line-height:12.5px;color:#000;letter-spacing:0.190px;">11 000</span>
<span class="t" style="left:104.30px;top:590.75px;font-size:12.5px;line-height:12.5px;color:#000;letter-spacing:0.097px;">17</span>
<span class="t" style="left:177.95px;top:590.75px;font-size:12.5px;line-height:12.5px;color:#000;letter-spacing:0.036px;">33 000</span>
<span class="t" style="left:283.95px;top:590.75px;font-size:12.5px;line-height:12.5px;color:#000;letter-spacing:0.036px;">69 700</span>
<span class="t" style="left:380.90px;top:590.75px;font-size:12.5px;line-height:12.5px;color:#000;letter-spacing:0.045px;">102 700</span>
<span class="t" style="left:470.90px;top:590.75px;font-size:12.5px;line-height:12.5px;color:#000;letter-spacing:0.176px;">116 450</span>
<span class="t" style="left:552.95px;top:590.75px;font-size:12.5px;line-height:12.5px;color:#000;letter-spacing:0.036px;">13 750</span>
<span class="t" style="left:104.30px;top:610.75px;font-size:12.5px;line-height:12.5px;color:#000;letter-spacing:0.097px;">18</span>
<span class="t" style="left:177.95px;top:610.75px;font-size:12.5px;line-height:12.5px;color:#000;letter-spacing:0.036px;">33 000</span>
<span class="t" style="left:283.95px;top:610.75px;font-size:12.5px;line-height:12.5px;color:#000;letter-spacing:0.036px;">73 800</span>
<span class="t" style="left:380.90px;top:610.75px;font-size:12.5px;line-height:12.5px;color:#000;letter-spacing:0.045px;">106 800</span>
<span class="t" style="left:470.90px;top:610.75px;font-size:12.5px;line-height:12.5px;color:#000;letter-spacing:0.045px;">123 300</span>
<span class="t" style="left:552.95px;top:610.75px;font-size:12.5px;line-height:12.5px;color:#000;letter-spacing:0.036px;">16 500</span>
<div class="b" style="left:26px;top:222px;width:95px;height:2px;background:#0f703b;"></div>
<div class="b" style="left:325px;top:222px;width:104px;height:2px;background:#0f703b;"></div>
<div class="b" style="left:429px;top:222px;width:90px;height:2px;background:#0f703b;"></div>
<div class="b" style="left:25px;top:224px;width:2px;height:403px;background:#0f703b;"></div>
<div class="b" style="left:27px;top:224px;width:1px;height:401px;background:#fff;"></div>
<div class="b" style="left:27px;top:224px;width:93px;height:1px;background:#fff;"></div>
<div class="b" style="left:119px;top:224px;width:1px;height:401px;background:#fff;"></div>
<div class="b" style="left:27px;top:624px;width:93px;height:1px;background:#fff;"></div>
<div class="b" style="left:325px;top:224px;width:1px;height:401px;background:#fff;"></div>
<div class="b" style="left:325px;top:224px;width:103px;height:1px;background:#fff;"></div>
<div class="b" style="left:427px;top:224px;width:1px;height:401px;background:#fff;"></div>
<div class="b" style="left:325px;top:624px;width:103px;height:1px;background:#fff;"></div>
<div class="b" style="left:429px;top:224px;width:1px;height:401px;background:#fff;"></div>
<div class="b" style="left:429px;top:224px;width:89px;height:1px;background:#fff;"></div>
<div class="b" style="left:517px;top:224px;width:1px;height:401px;background:#fff;"></div>
<div class="b" style="left:429px;top:624px;width:89px;height:1px;background:#fff;"></div>
<div class="b" style="left:429px;top:224px;width:90px;height:42px;border:1px solid #fff;"></div>
<div class="b" style="left:430px;top:225px;width:88px;height:40px;border:1px solid #0f703b;"></div>
<div class="b" style="left:19px;top:218px;width:106px;height:414px;border:3.2px solid #ff0000;border-radius:8px;"></div>
<div class="b" style="left:318.4px;top:218px;width:106.0px;height:414px;border:3.2px solid #ff0000;border-radius:8px;"></div>
<div class="b" style="left:424.3px;top:218px;width:101.80000000000001px;height:414px;border:3.2px solid #ff0000;border-radius:8px;"></div>
<div class="b" style="left:1px;top:667px;width:1105px;height:28px;background:#e6e6e6;"></div>
<svg class="b" style="left:27.5px;top:677px;" width="5" height="7" viewBox="0 0 5 7"><path d="M5 0V7L0 3.5Z" fill="#c4c4c4"/></svg>
<svg class="b" style="left:56px;top:677px;" width="5" height="7" viewBox="0 0 5 7"><path d="M0 0V7L5 3.5Z" fill="#c4c4c4"/></svg>
<div class="b" style="left:101px;top:671px;width:1px;height:21px;background:#ababab;"></div>
<span class="t" style="left:116.00px;top:674.80px;font-size:13px;line-height:13px;color:#444;letter-spacing:-0.038px;">microexcel.ru</span>
<div class="b" style="left:208px;top:667px;width:60px;height:25px;background:#fff;"></div>
<div class="b" style="left:208px;top:690px;width:60px;height:2px;background:#217346;"></div>
<span class="t" style="left:220.50px;top:674.80px;font-size:13px;line-height:13px;color:#217346;font-weight:bold;letter-spacing:-0.631px;">Лист1</span>
<svg class="b" style="left:300.5px;top:672.5px;" width="17" height="17" viewBox="0 0 17 17"><circle cx="8.5" cy="8.5" r="7.7" fill="none" stroke="#777" stroke-width="1.1"/><path d="M8.5 4.6V12.4M4.6 8.5H12.4" stroke="#666" stroke-width="1.5"/></svg>
<div class="b" style="left:664.2px;top:675.4px;width:1.6px;height:1.6px;background:#8c8c8c;"></div>
<div class="b" style="left:664.2px;top:679.6px;width:1.6px;height:1.6px;background:#8c8c8c;"></div>
<div class="b" style="left:664.2px;top:683.8px;width:1.6px;height:1.6px;background:#8c8c8c;"></div>
<div class="b" style="left:681px;top:674px;width:404px;height:15px;background:#dcdcdc;background-image:radial-gradient(#c9c9c9 .7px,transparent .8px);background-size:2.5px 2.5px;"></div>
<div class="b" style="left:681px;top:674px;width:15px;height:15px;background:#fff;border:1px solid #ababab;"></div>
<svg class="b" style="left:686px;top:678px;" width="5" height="7" viewBox="0 0 5 7"><path d="M5 0V7L0 3.5Z" fill="#666"/></svg>
<div class="b" style="left:696px;top:674px;width:345px;height:15px;background:#fff;border:1px solid #ababab;"></div>
<div class="b" style="left:1070px;top:674px;width:15px;height:15px;background:#fff;border:1px solid #ababab;"></div>
<svg class="b" style="left:1075.4px;top:678px;" width="5" height="7" viewBox="0 0 5 7"><path d="M0 0V7L5 3.5Z" fill="#666"/></svg>
<div class="b" style="left:1088px;top:206px;width:15px;height:462px;background:#dcdcdc;background-image:radial-gradient(#c9c9c9 .7px,transparent .8px);background-size:2.5px 2.5px;"></div>
<div class="b" style="left:1088px;top:206px;width:15px;height:15px;background:#fff;border:1px solid #ababab;"></div>
<svg class="b" style="left:1092px;top:211.5px;" width="7" height="4.4" viewBox="0 0 7 4.4"><path d="M0 4.4H7L3.5 0Z" fill="#666"/></svg>
<div class="b" style="left:1088px;top:221px;width:15px;height:411px;background:#fff;border:1px solid #ababab;"></div>
<div class="b" style="left:1088px;top:653px;width:15px;height:15px;background:#fff;border:1px solid #ababab;"></div>
<svg class="b" style="left:1092px;top:658.4px;" width="7" height="4.4" viewBox="0 0 7 4.4"><path d="M0 0H7L3.5 4.4Z" fill="#666"/></svg>
<span class="t" style="left:9.00px;top:699.00px;font-size:12px;line-height:12px;color:#444;letter-spacing:-0.094px;">Готово</span>
<svg class="b" style="left:65px;top:699.5px;" width="12.5" height="12.5" viewBox="0 0 12.5 12.5"><rect x="2.5" y="3.5" width="9.5" height="8.5" fill="#fff" stroke="#555"/><circle cx="2.8" cy="2.8" r="2.8" fill="#555"/>
<rect x="4.4" y="5.4" width="1.6" height="1.2" fill="#555"/><rect x="7" y="5.4" width="1.6" height="1.2" fill="#555"/><rect x="9.4" y="5.4" width="1.4" height="1.2" fill="#555"/>
<rect x="4.4" y="7.6" width="1.6" height="1.2" fill="#555"/><rect x="7" y="7.6" width="1.6" height="1.2" fill="#555"/><rect x="9.4" y="7.6" width="1.4" height="1.2" fill="#555"/>
<rect x="4.4" y="9.8" width="1.6" height="1.2" fill="#555"/><rect x="7" y="9.8" width="1.6" height="1.2" fill="#555"/><rect x="9.4" y="9.8" width="1.4" height="1.2" fill="#555"/></svg>
<span class="t" style="left:480.60px;top:699.30px;font-size:11.4px;line-height:11.4px;color:#444;letter-spacing:-0.335px;">Среднее: 45678,16667</span>
<span class="t" style="left:610.60px;top:699.30px;font-size:11.4px;line-height:11.4px;color:#444;letter-spacing:-0.098px;">Количество: 57</span>
<span class="t" style="left:707.20px;top:699.30px;font-size:11.4px;line-height:11.4px;color:#444;letter-spacing:-0.462px;">Сумма: 2466621</span>
<div class="b" style="left:806px;top:696px;width:38px;height:21px;background:#c8c8c8;"></div>
<svg class="b" style="left:818px;top:698.5px;" width="13" height="13" viewBox="0 0 13 13"><rect x=".5" y=".5" width="12" height="12" fill="none" stroke="#666"/><path d="M4.5 .5V12.5M8.5 .5V12.5M.5 4.5H12.5M.5 8.5H12.5" stroke="#666"/></svg>
<svg class="b" style="left:856px;top:699px;" width="14" height="13" viewBox="0 0 14 13"><rect x=".5" y=".5" width="13" height="12" fill="none" stroke="#666"/><rect x="3.5" y="2.5" width="7" height="8" fill="none" stroke="#666"/><path d="M5 4.5H9M5 6.5H9M5 8.5H9" stroke="#666" stroke-width=".9"/></svg>
<svg class="b" style="left:894px;top:699px;" width="14" height="13" viewBox="0 0 14 13"><rect x=".5" y=".5" width="13" height="12" fill="none" stroke="#666"/><path d="M3.5 .5V6.5H10.5V.5M7 .5V6.5" fill="none" stroke="#666"/></svg>
<div class="b" style="left:924.5px;top:705.2px;width:6px;height:1.6px;background:#444;"></div>
<div class="b" style="left:934.6px;top:705.6px;width:101px;height:1px;background:#a0a0a0;"></div>
<div class="b" style="left:983px;top:699.4px;width:4.6px;height:12px;background:#666;"></div>
<div class="b" style="left:1038.4px;top:705.2px;width:7.4px;height:1.6px;background:#444;"></div>
<div class="b" style="left:1041.3px;top:702.3px;width:1.6px;height:7.4px;background:#444;"></div>
<span class="t" style="left:1057.70px;top:699.30px;font-size:11.4px;line-height:11.4px;color:#444;letter-spacing:-0.683px;">100 %</span>
<div class="b" style="left:0px;top:65px;width:1.2px;height:653px;background:#217346;"></div>
<div class="b" style="left:1105.6px;top:65px;width:1.4px;height:653px;background:#217346;"></div>
<div class="b" style="left:0px;top:716.8px;width:1107px;height:1.2px;background:#217346;"></div>
</body></html>
